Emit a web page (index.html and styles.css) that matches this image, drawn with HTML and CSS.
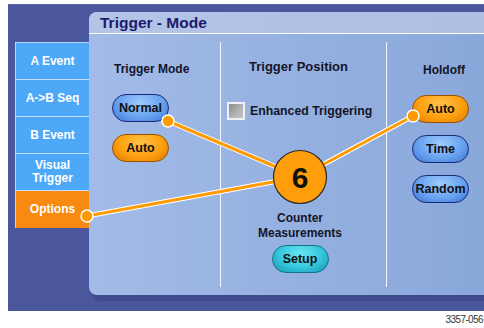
FILE: index.html
```html
<!DOCTYPE html>
<html lang="en">
<head>
    <meta charset="UTF-8">
    <meta name="viewport" content="width=device-width, initial-scale=1.0">
    <title>Trigger - Mode</title>
    <link rel="stylesheet" href="styles.css">
</head>
<body>

    <div class="screen">
        <div class="frame">
            <nav class="tabs">
                <div class="tab">A Event</div>
                <div class="tab">A-&gt;B Seq</div>
                <div class="tab">B Event</div>
                <div class="tab two-line">Visual<br>Trigger</div>
                <div class="tab active">Options</div>
            </nav>

            <section class="panel">
                <header class="panel-title">Trigger - Mode</header>
                <div class="panel-body">
                    <div class="col col-mode">
                        <div class="label">Trigger Mode</div>
                        <button class="pill blue">Normal</button>
                        <button class="pill orange">Auto</button>
                    </div>
                    <div class="col col-pos">
                        <div class="label big">Trigger Position</div>
                        <label class="check-row">
                            <span class="checkbox"></span>
                            <span>Enhanced Triggering</span>
                        </label>
                        <div class="counter">
                            <div class="label">Counter<br>Measurements</div>
                            <button class="pill teal">Setup</button>
                        </div>
                    </div>
                    <div class="col col-hold">
                        <div class="label">Holdoff</div>
                        <button class="pill orange">Auto</button>
                        <button class="pill blue">Time</button>
                        <button class="pill blue">Random</button>
                    </div>
                </div>
            </section>
        </div>

        <div class="fig-num">3357-056</div>

        <!-- callout lines over the screen -->
        <svg class="callouts" width="484" height="328" viewBox="0 0 484 328">
            <g stroke="#fff" stroke-width="5" stroke-linecap="round">
                <line x1="168" y1="117" x2="300" y2="173"/>
                <line x1="87" y1="212" x2="300" y2="173"/>
                <line x1="413" y1="112" x2="300" y2="173"/>
            </g>
            <g stroke="#ff9a00" stroke-width="3" stroke-linecap="round">
                <line x1="168" y1="117" x2="300" y2="173"/>
                <line x1="87" y1="212" x2="300" y2="173"/>
                <line x1="413" y1="112" x2="300" y2="173"/>
            </g>
            <g fill="#ff9a00" stroke="#fff" stroke-width="1.5">
                <circle cx="168" cy="117" r="6"/>
                <circle cx="87" cy="212" r="6"/>
                <circle cx="413" cy="112" r="6"/>
            </g>
            <circle cx="300" cy="173" r="26.5" fill="#ff9e0a" stroke="#2a2a2a" stroke-width="1.2"/>
            <text x="300" y="184" text-anchor="middle" class="callout-num">6</text>
        </svg>
    </div>

</body>
</html>
```

FILE: styles.css
```css
body {
    margin: 0;
    background: #fff;
    font-family: "Liberation Sans", Arial, sans-serif;
    overflow: hidden;
}
.screen {
    position: relative;
    width: 484px;
    height: 328px;
}
.frame {
    margin: 4px 0 0 8px;
    height: 307px;
    background: #4b579d;
    border-top: 1px solid #5a68ac;
    box-sizing: border-box;
    display: flex;
    align-items: flex-start;
}
.tabs {
    width: 74px;
    margin: 37px 0 0 7px;
    border-top: 1px solid #b8d8ff;
    border-left: 1px solid #b8d8ff;
    box-sizing: border-box;
}
.tab {
    height: 37px;
    border-bottom: 1px solid #c4e0ff;
    box-sizing: border-box;
    background: #4ea8f8;
    color: #fff;
    font-weight: bold;
    font-size: 12px;
    display: flex;
    align-items: center;
    justify-content: center;
    text-align: center;
    line-height: 13px;
}
.tab.active {
    background: #f88a12;
    border-bottom-color: #f88a12;
}
.panel {
    flex: 1;
    margin-top: 7px;
    height: 283px;
    border-radius: 8px 0 0 8px;
    background: linear-gradient(to right, #a3bbe8, #94b0e0 55%, #89a8da);
    box-shadow: 3px 6px 1px #3d4a8c;
}
.panel-title {
    height: 21px;
    border-bottom: 1px solid #fff;
    border-radius: 8px 0 0 0;
    background: linear-gradient(to right, #b3c4e6, #aec0e2);
    color: #1c1a6e;
    font-weight: bold;
    font-size: 15.5px;
    line-height: 22px;
    padding-left: 11px;
}
.panel-body {
    display: flex;
    padding: 8px 0;
    height: 261px;
    box-sizing: border-box;
}
.col {
    display: flex;
    flex-direction: column;
    align-items: flex-start;
}
.label {
    color: #15152a;
    font-weight: bold;
    font-size: 12px;
    line-height: 15px;
}
.label.big {
    font-size: 13px;
    line-height: 16px;
}
.pill {
    width: 57px;
    height: 28px;
    border-radius: 14px;
    border: 1.5px solid #1c2a74;
    font-family: "Liberation Sans", Arial, sans-serif;
    font-weight: bold;
    font-size: 12.5px;
    color: #111;
    padding: 0;
}
.pill.blue {
    background: radial-gradient(ellipse at 50% 30%, #9ccaff 0%, #6aa4f0 55%, #3a74d4 100%);
}
.pill.orange {
    border-color: #9a5200;
    background: radial-gradient(ellipse at 50% 30%, #ffc24a 0%, #ffa010 55%, #d87800 100%);
}
.pill.teal {
    border-color: #12748a;
    background: radial-gradient(ellipse at 50% 30%, #6ae8f4 0%, #34c6dc 55%, #1694ae 100%);
}

.col-mode {
    width: 131px;
    padding: 20px 0 0 23px;
    box-sizing: border-box;
}
.col-mode .label {
    margin-left: 2px;
    margin-bottom: 17px;
}
.col-mode .pill + .pill {
    margin-top: 12px;
}

.col-pos {
    width: 166px;
    border-left: 1px solid #f4f8ff;
    padding-top: 17px;
    box-sizing: border-box;
    align-items: stretch;
}
.col-pos > .label {
    text-align: center;
    padding-right: 10px;
    margin-bottom: 27px;
}
.check-row {
    display: flex;
    align-items: center;
    gap: 5px;
    margin-left: 6px;
    color: #15152a;
    font-weight: bold;
    font-size: 12.3px;
}
.checkbox {
    width: 18px;
    height: 18px;
    box-sizing: border-box;
    border: 2px solid #eef2f8;
    background: linear-gradient(135deg, #8a8a8a, #b4b4b4 60%, #c4c4c4);
}
.counter {
    margin-top: 91px;
    display: flex;
    flex-direction: column;
    align-items: center;
    padding-right: 7px;
    text-align: center;
}
.counter .pill {
    margin-top: 4px;
}

.col-hold {
    flex: 1;
    border-left: 1px solid #f4f8ff;
    padding: 21px 0 0 25px;
}
.col-hold .label {
    margin-left: 11px;
    margin-bottom: 17px;
}
.col-hold .pill + .pill {
    margin-top: 12px;
}

.fig-num {
    text-align: right;
    margin-right: 1px;
    margin-top: 2px;
    font-size: 10px;
    line-height: 13px;
    letter-spacing: -0.6px;
    color: #333;
    white-space: nowrap;
}
.callouts {
    position: absolute;
    top: 0;
    left: 0;
    pointer-events: none;
}
.callout-num {
    font-family: "Liberation Sans", Arial, sans-serif;
    font-weight: bold;
    font-size: 30px;
    fill: #111;
}
```
